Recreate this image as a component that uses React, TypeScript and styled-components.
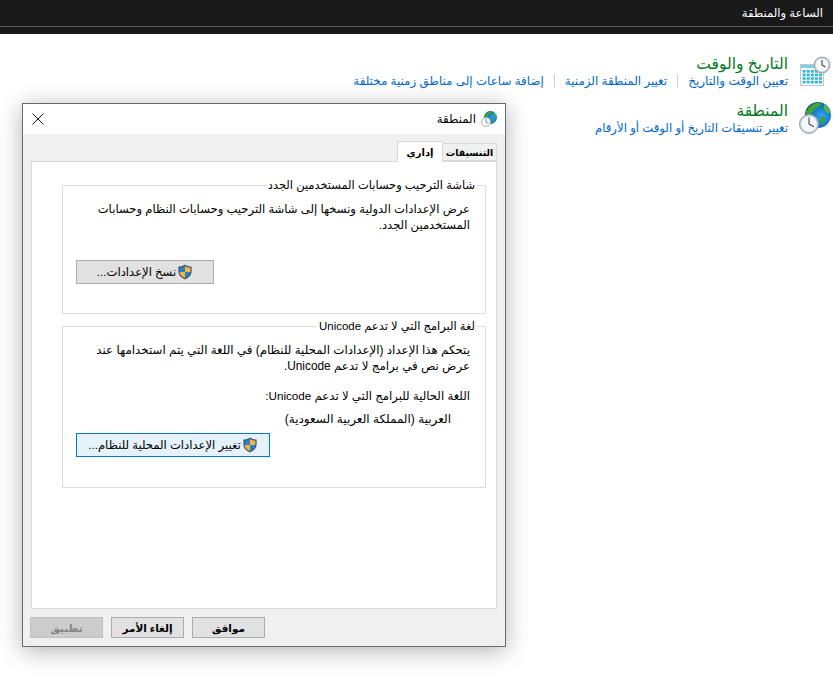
import React from "react"
import styled, { createGlobalStyle } from "styled-components"

const GlobalStyle = createGlobalStyle`
    html, body {
        margin: 0;
        padding: 0;
        background: #fff;
    }

    body {
        font-family: "Liberation Sans", "DejaVu Sans", sans-serif;
        font-size: 12px;
        color: #000;
    }
`

const Page = styled.div`
    position: relative;
    width: 833px;
    height: 683px;
    overflow: hidden;
    background: #fff;
`

const Header = styled.header`
    height: 34px;
    background: #191919;
    box-sizing: border-box;
`

const HeaderTitle = styled.div`
    direction: rtl;
    height: 27px;
    line-height: 26px;
    padding-right: 10px;
    box-sizing: border-box;
    border-bottom: 1px solid #5c5c5c;
    color: #fff;
    font-size: 11.6px;
`

const Categories = styled.main`
    direction: rtl;
    display: flex;
    flex-direction: column;
    gap: 12px;
    padding: 20px 2px 0 0;
`

const Category = styled.section`
    display: flex;
    gap: 11px;
`

const IconSlot = styled.div<{ $top: number }>`
    flex: none;
    width: 32px;
    height: 32px;
    margin-top: ${props => props.$top}px;
`

const CategoryBody = styled.div`
    display: flex;
    flex-direction: column;
`

const CategoryTitle = styled.a`
    color: #007a1c;
    font-size: 15.5px;
    line-height: 19px;
`

const LinkRow = styled.div`
    display: flex;
    align-items: center;
    height: 16px;
`

const TaskLink = styled.a<{ $divided?: boolean; $size?: number }>`
    color: #0066cc;
    font-size: ${props => props.$size ?? 11.9}px;
    line-height: 14px;
    padding-left: 10px;
    margin-left: 10px;
    border-left: ${props => props.$divided ? "1px solid #cfcfcf" : "none"};
`

const Dialog = styled.div`
    position: absolute;
    left: 22px;
    top: 103px;
    width: 484px;
    height: 544px;
    box-sizing: border-box;
    direction: rtl;
    display: flex;
    flex-direction: column;
    border: 1px solid #6b6b6b;
    background: #f0f0f0;
    box-shadow: 0 4px 22px rgba(0, 0, 0, 0.3);
`

const TitleBar = styled.div`
    height: 30px;
    flex: none;
    box-sizing: border-box;
    display: flex;
    align-items: center;
    gap: 5px;
    padding: 0 8px 1px 9px;
    background: #fff;
`

const DialogTitle = styled.span`
    flex: 1;
    font-size: 11.8px;
`

const CloseButton = styled.button`
    width: 12px;
    height: 12px;
    padding: 0;
    border: 0;
    background: none;
    display: flex;
`

const DialogBody = styled.div`
    flex: 1;
    display: flex;
    flex-direction: column;
    padding: 7px 8px 0 8px;
`

const TabStrip = styled.div`
    display: flex;
    align-items: flex-end;
    height: 20px;
    position: relative;
    z-index: 1;
`

const Tab = styled.div<{ $active?: boolean }>`
    box-sizing: border-box;
    display: flex;
    align-items: center;
    justify-content: center;
    border: 1px solid #d9d9d9;
    font-size: ${props => props.$active ? "10px" : "9.4px"};
    font-weight: bold;
    height: ${props => props.$active ? "21px" : "18px"};
    width: ${props => props.$active ? "46px" : "55px"};
    background: ${props => props.$active ? "#fff" : "#f0f0f0"};
    border-bottom: ${props => props.$active ? "none" : "1px solid #d9d9d9"};
    margin-bottom: ${props => props.$active ? "-1px" : "0"};
    margin-right: ${props => props.$active ? "-1px" : "0"};
`

const TabPanel = styled.div`
    height: 448px;
    box-sizing: border-box;
    border: 1px solid #d9d9d9;
    background: #fff;
    padding: 15px 10px 0 30px;
    display: flex;
    flex-direction: column;
    gap: 4px;
`

const GroupBox = styled.fieldset<{ $bottom: number }>`
    margin: 0;
    min-width: 0;
    padding: 8px 15px ${props => props.$bottom}px 13px;
    border: 1px solid #dcdcdc;
    display: flex;
    flex-direction: column;
`

const GroupLegend = styled.legend`
    padding: 0 2px;
    margin-right: -7px;
    font-size: 11.45px;
    line-height: 16px;
`

const Paragraph = styled.p<{ $indent?: number; $top?: number; $size?: number }>`
    margin: ${props => props.$top ?? 0}px ${props => props.$indent ?? 0}px 0 0;
    font-size: ${props => props.$size ?? 11.6}px;
    line-height: 16px;
    white-space: nowrap;
`

const CommandButton = styled.button<{ $width: number; $focused?: boolean; $top: number }>`
    align-self: flex-end;
    box-sizing: border-box;
    width: ${props => props.$width}px;
    height: 24px;
    margin-top: ${props => props.$top}px;
    padding: 0;
    display: flex;
    align-items: center;
    justify-content: center;
    gap: 1px;
    border: 1px solid ${props => props.$focused ? "#0078d7" : "#adadad"};
    background: ${props => props.$focused ? "#e5f1fb" : "#e1e1e1"};
    color: #000;
    font-family: inherit;
    font-size: 11.6px;
    direction: rtl;
`

const Footer = styled.div`
    flex: 1;
    display: flex;
    align-items: flex-start;
    justify-content: flex-end;
    gap: 8px;
    padding-top: 8px;
    margin-left: -1px;
`

const FooterButton = styled.button<{ $disabled?: boolean }>`
    box-sizing: border-box;
    width: 73px;
    height: 21px;
    padding: 0;
    border: 1px solid ${props => props.$disabled ? "#bfbfbf" : "#adadad"};
    background: ${props => props.$disabled ? "#cccccc" : "#e1e1e1"};
    color: ${props => props.$disabled ? "#838383" : "#000"};
    font-family: inherit;
    font-size: 10.5px;
    font-weight: bold;
`

function ClockFace({ cx, cy, r }: { cx: number; cy: number; r: number }) {
    return (
        <g>
            <circle cx={cx} cy={cy} r={r} fill="#c9d3da" stroke="#96a2aa" strokeWidth="1" />
            <circle cx={cx} cy={cy} r={r - 1.8} fill="#f5f7f8" />
            <path d={`M${cx} ${cy - r + 3}V${cy}L${cx + (r - 4) * 0.87} ${cy + (r - 4) * 0.5}`} fill="none" stroke="#3f474d" strokeWidth="1.1" />
        </g>
    )
}

function CalendarIcon() {
    const cells = []
    for (let row = 0; row < 4; row++) {
        for (let col = 0; col < 5; col++) {
            cells.push(<rect key={`${row}-${col}`} x={3.6 + col * 4.1} y={14 + row * 3.6} width="3" height="2.6" fill="#35b5d6" />)
        }
    }
    return (
        <svg width="32" height="32" viewBox="0 0 32 32">
            <rect x="1.500" y="8.500" width="23" height="21" fill="#f6f8f9" stroke="#c0c8cc" />
            <rect x="2" y="9" width="22" height="3" fill="#7ed0e6" />
            {cells}
            <ClockFace cx={23} cy={9} r={8} />
        </svg>
    )
}

function GlobeIcon({ size, id }: { size: number; id: string }) {
    return (
        <svg width={size} height={size} viewBox="0 0 32 32">
            <defs>
                <radialGradient id={id} cx="0.65" cy="0.55" r="0.65">
                    <stop offset="0" stopColor="#35a8ee" />
                    <stop offset="0.65" stopColor="#0f6fc9" />
                    <stop offset="1" stopColor="#0b3f8e" />
                </radialGradient>
            </defs>
            <circle cx="19" cy="13" r="13" fill={`url(#${id})`} />
            <path d="M8 8c3-5 8-7.500 13-7.500 2 1.400 1 3.700-2 4.700-1.500 1.800-4 1-4.500 3.800-1 2.500-3 3.500-7.500 3-.5-1.500-.5-2.500 1-4z" fill="#3ea62f" />
            <path d="M25 2c2.500 1.500 5.500 5 6.500 9-1.500 1-3.500 0-5-1.500C25 7 24 5 25 2z" fill="#58b83e" />
            <path d="M23 14c2 .500 3 2 2.500 4.500-.5 2-1.500 3.500-3 4.500-1-2.500-1.500-6-.5-8z" fill="#3ea62f" />
            <ClockFace cx={10} cy={22} r={9.500} />
        </svg>
    )
}

function ShieldIcon() {
    return (
        <svg width="16" height="16" viewBox="0 0 16 16">
            <path d="M8 .6C6 2 4 2.600 1.400 2.600v5c0 3.600 2.800 6.200 6.600 7.800 3.800-1.600 6.600-4.200 6.600-7.800v-5C12 2.600 10 2 8 .6z" fill="#46536b" />
            <path d="M8 2v6H2.600V3.700C4.600 3.600 6.400 3.100 8 2z" fill="#2a7fd0" />
            <path d="M8 2c1.600 1.100 3.400 1.600 5.400 1.700V8H8z" fill="#f7b733" />
            <path d="M2.600 8H8v6C5 12.700 2.800 10.700 2.600 8z" fill="#f7b733" />
            <path d="M8 8h5.400C13.200 10.700 11 12.700 8 14z" fill="#2a7fd0" />
        </svg>
    )
}

export default function App() {
    return (
        <Page>
            <GlobalStyle />
            <Header>
                <HeaderTitle>الساعة والمنطقة</HeaderTitle>
            </Header>

            <Categories>
                <Category>
                    <IconSlot $top={2}>
                        <CalendarIcon />
                    </IconSlot>
                    <CategoryBody>
                        <CategoryTitle>التاريخ والوقت</CategoryTitle>
                        <LinkRow>
                            <TaskLink $divided $size={12}>تعيين الوقت والتاريخ</TaskLink>
                            <TaskLink $divided>تغيير المنطقة الزمنية</TaskLink>
                            <TaskLink>إضافة ساعات إلى مناطق زمنية مختلفة</TaskLink>
                        </LinkRow>
                    </CategoryBody>
                </Category>
                <Category>
                    <IconSlot $top={1}>
                        <GlobeIcon size={32} id="globe-large" />
                    </IconSlot>
                    <CategoryBody>
                        <CategoryTitle>المنطقة</CategoryTitle>
                        <LinkRow>
                            <TaskLink $size={11.7}>تغيير تنسيقات التاريخ أو الوقت أو الأرقام</TaskLink>
                        </LinkRow>
                    </CategoryBody>
                </Category>
            </Categories>

            <Dialog>
                <TitleBar>
                    <GlobeIcon size={16} id="globe-small" />
                    <DialogTitle>المنطقة</DialogTitle>
                    <CloseButton aria-label="close">
                        <svg width="12" height="12" viewBox="0 0 12 12">
                            <path d="M.5.5l11 11M11.500.5l-11 11" stroke="#111" strokeWidth="1" fill="none" />
                        </svg>
                    </CloseButton>
                </TitleBar>
                <DialogBody>
                    <TabStrip>
                        <Tab>التنسيقات</Tab>
                        <Tab $active>إداري</Tab>
                    </TabStrip>
                    <TabPanel>
                        <GroupBox $bottom={29}>
                            <GroupLegend>شاشة الترحيب وحسابات المستخدمين الجدد</GroupLegend>
                            <Paragraph>
                                عرض الإعدادات الدولية ونسخها إلى شاشة الترحيب وحسابات النظام وحسابات
                                <br />
                                المستخدمين الجدد.
                            </Paragraph>
                            <CommandButton $width={138} $top={27}>
                                <ShieldIcon />
                                نسخ الإعدادات...
                            </CommandButton>
                        </GroupBox>
                        <GroupBox $bottom={30}>
                            <GroupLegend>لغة البرامج التي لا تدعم Unicode</GroupLegend>
                            <Paragraph $size={11.85}>
                                يتحكم هذا الإعداد (الإعدادات المحلية للنظام) في اللغة التي يتم استخدامها عند
                                <br />
                                عرض نص في برامج لا تدعم Unicode.
                            </Paragraph>
                            <Paragraph $top={14} $size={11.7}>اللغة الحالية للبرامج التي لا تدعم Unicode:</Paragraph>
                            <Paragraph $top={7} $indent={19} $size={12}>العربية (المملكة العربية السعودية)</Paragraph>
                            <CommandButton $width={194} $top={6} $focused>
                                <ShieldIcon />
                                تغيير الإعدادات المحلية للنظام...
                            </CommandButton>
                        </GroupBox>
                    </TabPanel>
                    <Footer>
                        <FooterButton>موافق</FooterButton>
                        <FooterButton>إلغاء الأمر</FooterButton>
                        <FooterButton $disabled>تطبيق</FooterButton>
                    </Footer>
                </DialogBody>
            </Dialog>
        </Page>
    )
}
